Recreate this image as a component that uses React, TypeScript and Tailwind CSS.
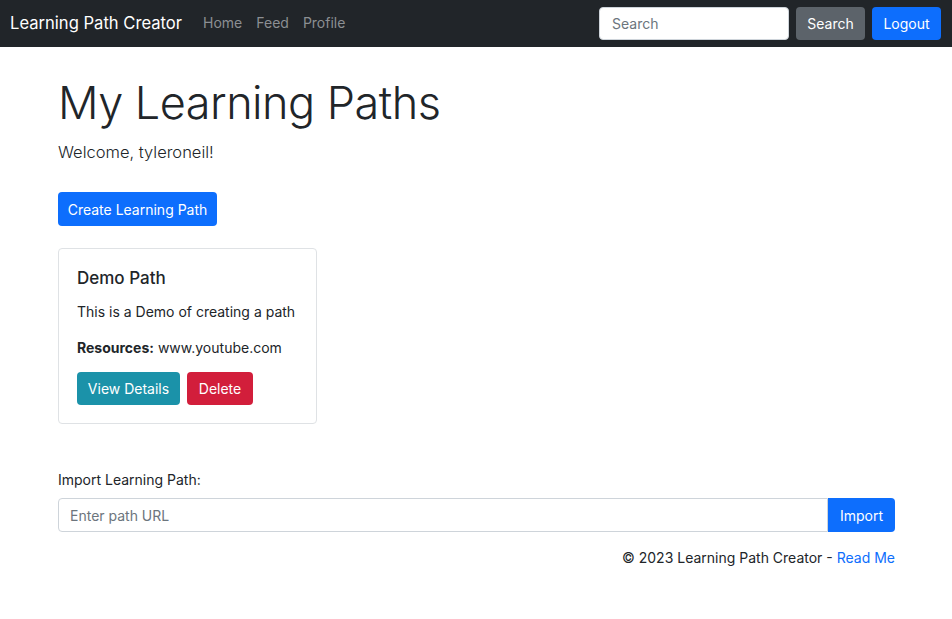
import React, { useState } from 'react';

const App: React.FC = () => {
  const [search, setSearch] = useState<string>('');
  const [pathUrl, setPathUrl] = useState<string>('');

  return (
    <div className="min-h-[619px] bg-white text-[#212529]" style={{ fontFamily: 'Inter, "Noto Sans", sans-serif' }}>
      {/* navbar */}
      <nav className="flex h-[47px] items-center justify-between bg-[#212529] pl-[10px] pr-[11px] pb-px">
        <div className="flex items-center">
          <a href="#" className="mr-[21px] text-[16.6px] text-white">Learning Path Creator</a>
          <div className="flex items-center gap-[14px] text-[14px] text-[#8c8f93]">
            <a href="#">Home</a>
            <a href="#">Feed</a>
            <a href="#">Profile</a>
          </div>
        </div>
        <div className="flex items-center">
          <input
            value={search}
            onChange={(e) => setSearch(e.target.value)}
            placeholder="Search"
            className="h-[33px] w-[190px] rounded-[4px] border border-[#ced4da] bg-white px-3 text-[14px] placeholder:text-[#6c757d] outline-none"
          />
          <button className="ml-[7px] h-[33px] w-[69px] rounded-[4px] bg-[#5c636a] text-[14px] text-white">Search</button>
          <button className="ml-[7px] h-[33px] w-[69px] rounded-[4px] bg-[#0d6efd] text-[14px] text-white">Logout</button>
        </div>
      </nav>

      <main className="mx-[57px] pl-px">
        <h1 className="mt-[27px] text-[45px] leading-[58px] font-light tracking-[-0.5px]">My Learning Paths</h1>
        <p className="mt-[8px] text-[16.5px] leading-[24px] font-light">Welcome, tyleroneil!</p>

        <button className="mt-[28px] h-[34px] w-[159px] rounded-[4px] bg-[#0d6efd] text-[14px] text-white">
          Create Learning Path
        </button>

        <div className="mt-[22px] w-[259px] rounded-[4px] border border-[#dfe2e5] px-[18px] pt-[18px] pb-[18px]">
          <h5 className="text-[17px] leading-[22px] font-medium">Demo Path</h5>
          <p className="mt-[12px] text-[14px] leading-[21px]">This is a Demo of creating a path</p>
          <p className="mt-[15px] text-[14px] leading-[21px]">
            <strong className="font-bold">Resources:</strong> www.youtube.com
          </p>
          <div className="mt-[14px] flex gap-[7px]">
            <button className="h-[33px] w-[103px] rounded-[4px] bg-[#1b92a9] text-[14px] text-white">View Details</button>
            <button className="h-[33px] w-[66px] rounded-[4px] bg-[#d21e3b] text-[14px] text-white">Delete</button>
          </div>
        </div>

        <label className="mt-[45px] block text-[14px] leading-[21px]">Import Learning Path:</label>
        <div className="mt-[8px] flex">
          <input
            value={pathUrl}
            onChange={(e) => setPathUrl(e.target.value)}
            placeholder="Enter path URL"
            className="h-[34px] flex-1 rounded-l-[4px] border border-[#ced4da] px-[11px] text-[14px] placeholder:text-[#6c757d] outline-none"
          />
          <button className="h-[34px] w-[67px] rounded-r-[4px] bg-[#0d6efd] text-[14px] text-white">Import</button>
        </div>

        <footer className="mt-[15px] text-right text-[14px] leading-[21px]">
          © 2023 Learning Path Creator - <a href="#" className="text-[#0d6efd]">Read Me</a>
        </footer>
      </main>
    </div>
  );
};

export default App;
